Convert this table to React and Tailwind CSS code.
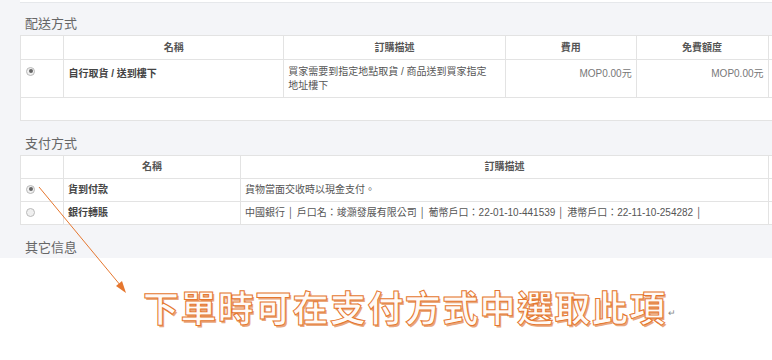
import React from "react";

const font = { fontFamily: '"Liberation Sans", "Noto Sans CJK TC", sans-serif' };

const Radio = ({ checked }) => (
  <span className="mt-[2px] ml-[4px] flex h-[9px] w-[9px] items-center justify-center rounded-full border border-[#b9b9b9] bg-[#f0f0f0]">
    {checked && <span className="h-[4px] w-[4px] rounded-full bg-[#666]" />}
  </span>
);

const shippingRows = [
  {
    name: "自行取貨 / 送到樓下",
    desc: ["買家需要到指定地點取貨 / 商品送到買家指定", "地址樓下"],
    fee: "MOP0.00元",
    free: "MOP0.00元",
  },
];

const payRows = [
  { name: "貨到付款", desc: "貨物當面交收時以現金支付。", checked: true },
  {
    name: "銀行轉賬",
    desc: "中國銀行 │ 戶口名：竣灝發展有限公司 │ 葡幣戶口：22-01-10-441539 │ 港幣戶口：22-11-10-254282 │",
    checked: false,
  },
];

export default function App() {
  return (
    <div className="relative h-[360px] w-[772px] overflow-hidden bg-white" style={font}>
      <div className="h-[258px] bg-[#f4f5f8] pl-5">
        <div className="h-[3px] border-b border-[#e6e8eb] bg-white" />

        <h3 className="mt-[10px] pl-[5px] text-[13px] leading-[22px] text-[#666]">配送方式</h3>
        <div className="w-[800px] border-y border-l border-[#e3e3e3] bg-white pb-[22px]">
          <table className="table-fixed border-collapse text-[10px] text-[#555]">
            <colgroup>
              <col className="w-[43px]" />
              <col className="w-[220px]" />
              <col className="w-[222px]" />
              <col className="w-[131px]" />
              <col className="w-[132px]" />
              <col className="w-[52px]" />
            </colgroup>
            <thead>
              <tr className="h-[23px] border-b border-[#e3e3e3]">
                <th className="border-r border-[#e3e3e3]" />
                <th className="border-r border-[#e3e3e3] font-semibold text-[#555]">名稱</th>
                <th className="border-r border-[#e3e3e3] font-semibold text-[#555]">訂購描述</th>
                <th className="border-r border-[#e3e3e3] font-semibold text-[#555]">費用</th>
                <th className="border-r border-[#e3e3e3] font-semibold text-[#555]">免費額度</th>
                <th />
              </tr>
            </thead>
            <tbody>
              {shippingRows.map((r) => (
                <tr key={r.name} className="h-[38px] border-b border-[#e3e3e3] align-top">
                  <td className="border-r border-[#e3e3e3] pt-[5px] pl-[1px]">
                    <Radio checked />
                  </td>
                  <td className="border-r border-[#e3e3e3] pt-[6px] pl-[4px] font-bold text-[#444]">{r.name}</td>
                  <td className="border-r border-[#e3e3e3] pt-[5px] pl-[4px] leading-[14px]">
                    {r.desc[0]}
                    <br />
                    {r.desc[1]}
                  </td>
                  <td className="border-r border-[#e3e3e3] pt-[6px] pr-[4px] text-right text-[#777]">{r.fee}</td>
                  <td className="border-r border-[#e3e3e3] pt-[6px] pr-[4px] text-right text-[#777]">{r.free}</td>
                  <td />
                </tr>
              ))}
            </tbody>
          </table>
        </div>

        <h3 className="mt-[12px] pl-[5px] text-[13px] leading-[22px] text-[#666]">支付方式</h3>
        <table className="w-[800px] table-fixed border-collapse bg-white text-[10px] text-[#555]">
          <colgroup>
            <col className="w-[43px]" />
            <col className="w-[177px]" />
            <col className="w-[528px]" />
            <col className="w-[52px]" />
          </colgroup>
          <thead>
            <tr className="h-[23px] border border-[#e3e3e3]">
              <th className="border-r border-[#e3e3e3]" />
              <th className="border-r border-[#e3e3e3] font-semibold text-[#555]">名稱</th>
              <th className="border-r border-[#e3e3e3] font-semibold text-[#555]">訂購描述</th>
              <th />
            </tr>
          </thead>
          <tbody>
            {payRows.map((r) => (
              <tr key={r.name} className="h-[23px] border border-[#e3e3e3]">
                <td className="border-r border-[#e3e3e3] pl-[1px] align-middle">
                  <span className="-mt-[3px] block">
                    <Radio checked={r.checked} />
                  </span>
                </td>
                <td className="border-r border-[#e3e3e3] pl-[4px] font-bold text-[#444]">{r.name}</td>
                <td className="border-r border-[#e3e3e3] pl-[4px] whitespace-nowrap">{r.desc}</td>
                <td />
              </tr>
            ))}
          </tbody>
        </table>

        <h3 className="mt-[12px] pl-[5px] text-[13px] leading-[22px] text-[#666]">其它信息</h3>
      </div>

      <div className="flex items-end pl-[143px] pt-[30px]">
        <span
          className="text-[36px] leading-none font-bold tracking-[1.4px] text-[#fffaf6] [-webkit-text-stroke:1px_#e5772f] [text-shadow:1.5px_1.5px_0_#e9a77c]"
          style={{ fontFamily: '"Noto Sans CJK TC", sans-serif' }}
        >
          下單時可在支付方式中選取此項
        </span>
        <span className="mb-[4px] ml-[1px] text-[9px] text-[#888]">↵</span>
      </div>

      <svg className="absolute top-0 left-0" width="772" height="360">
        <line x1="39" y1="187" x2="121" y2="286" stroke="#e5772f" strokeWidth="1" />
        <polygon points="126,293 116,286 122,281" fill="#e5772f" />
      </svg>
    </div>
  );
}
